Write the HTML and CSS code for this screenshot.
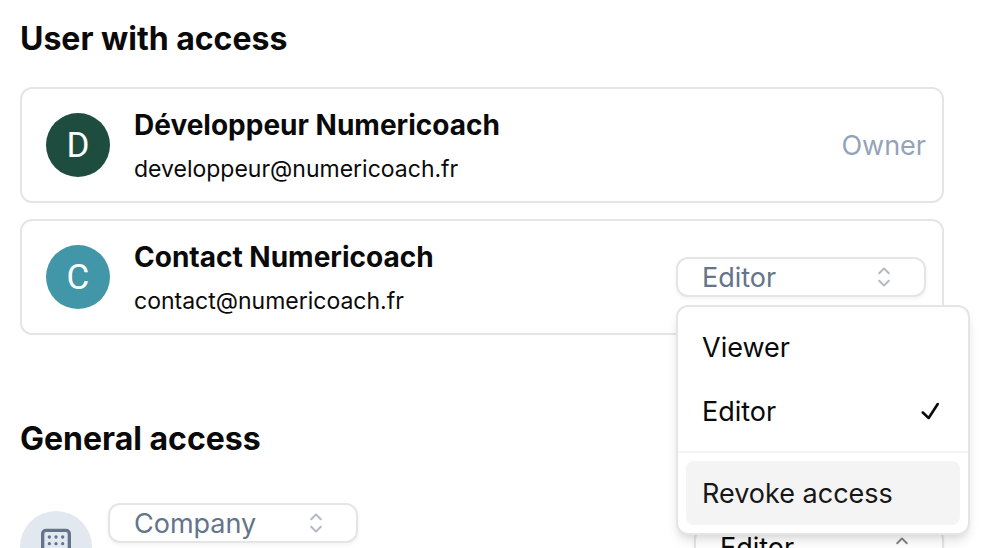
FILE: index.html
```html
<!DOCTYPE html>
<html lang="en">
<head>
    <meta charset="UTF-8">
    <meta name="viewport" content="width=device-width, initial-scale=1.0">
    <title>Share access</title>
    <link rel="stylesheet" href="styles.css">
</head>
<body>
    <!-- shared icons -->
    <svg class="sprite" aria-hidden="true">
        <symbol id="caret-sort" viewBox="0 0 15 15">
            <path fill="currentColor" fill-rule="evenodd" d="M4.93179 5.43179C4.75605 5.60753 4.75605 5.89245 4.93179 6.06819C5.10753 6.24392 5.39245 6.24392 5.56819 6.06819L7.49999 4.13638L9.43179 6.06819C9.60753 6.24392 9.89245 6.24392 10.0682 6.06819C10.2439 5.89245 10.2439 5.60753 10.0682 5.43179L7.81819 3.18179C7.73379 3.0974 7.61933 3.04999 7.49999 3.04999C7.38064 3.04999 7.26618 3.0974 7.18179 3.18179L4.93179 5.43179ZM10.0682 9.56819C10.2439 9.39245 10.2439 9.10753 10.0682 8.93179C9.89245 8.75606 9.60753 8.75606 9.43179 8.93179L7.49999 10.8636L5.56819 8.93179C5.39245 8.75606 5.10753 8.75606 4.93179 8.93179C4.75605 9.10753 4.75605 9.39245 4.93179 9.56819L7.18179 11.8182C7.35753 11.9939 7.64245 11.9939 7.81819 11.8182L10.0682 9.56819Z"/>
        </symbol>
    </svg>

    <main class="page">
        <section>
            <h2 class="title">User with access</h2>
            <ul class="users">
                <li class="user-card">
                    <span class="avatar avatar-green">D</span>
                    <div class="user-info">
                        <p class="user-name">Développeur Numericoach</p>
                        <p class="user-email">developpeur@numericoach.fr</p>
                    </div>
                    <span class="owner">Owner</span>
                </li>
                <li class="user-card">
                    <span class="avatar avatar-blue">C</span>
                    <div class="user-info">
                        <p class="user-name">Contact Numericoach</p>
                        <p class="user-email">contact@numericoach.fr</p>
                    </div>
                    <div class="select-box">
                        <select class="select" aria-label="Role of Contact Numericoach">
                            <option>Viewer</option>
                            <option selected>Editor</option>
                        </select>
                        <svg class="caret"><use href="#caret-sort"/></svg>
                        <div class="menu">
                            <div class="menu-group">
                                <button type="button" class="menu-item">Viewer</button>
                                <button type="button" class="menu-item">
                                    Editor
                                    <svg class="check" viewBox="0 0 15 15" aria-hidden="true">
                                        <path fill="currentColor" fill-rule="evenodd" d="M11.4669 3.72684C11.7558 3.91574 11.8369 4.30308 11.648 4.59198L7.39799 11.092C7.29783 11.2452 7.13556 11.3467 6.95402 11.3699C6.77247 11.3931 6.58989 11.3355 6.45446 11.2124L3.70446 8.71241C3.44905 8.48022 3.43023 8.08494 3.66242 7.82953C3.89461 7.57412 4.28989 7.55529 4.5453 7.78749L6.75292 9.79441L10.6018 3.90792C10.7907 3.61902 11.178 3.53795 11.4669 3.72684Z"/>
                                    </svg>
                                </button>
                            </div>
                            <div class="menu-group">
                                <button type="button" class="menu-item active">Revoke access</button>
                            </div>
                        </div>
                    </div>
                </li>
            </ul>
        </section>

        <section>
            <h2 class="title title-general">General access</h2>
            <div class="general">
                <span class="general-icon">
                    <svg viewBox="0 0 24 24" fill="none" stroke="currentColor" stroke-width="2" stroke-linecap="round" stroke-linejoin="round" aria-hidden="true">
                        <rect x="4" y="2" width="16" height="20" rx="2"/>
                        <path d="M9 22v-4h6v4M8 6h.01M16 6h.01M12 6h.01M12 10h.01M12 14h.01M16 10h.01M16 14h.01M8 10h.01M8 14h.01"/>
                    </svg>
                </span>
                <div class="general-scope">
                    <div class="select-box">
                        <select class="select" aria-label="Who has access">
                            <option>Company</option>
                        </select>
                        <svg class="caret"><use href="#caret-sort"/></svg>
                    </div>
                </div>
                <div class="select-box dark">
                    <select class="select" aria-label="General role">
                        <option>Editor</option>
                    </select>
                    <svg class="caret"><use href="#caret-sort"/></svg>
                </div>
            </div>
        </section>
    </main>
</body>
</html>
```
FILE: styles.css
```css
* {
    box-sizing: border-box;
}
body {
    margin: 0;
    font-family: Inter, "Liberation Sans", sans-serif;
    font-size: 27px;
    color: #0a0a0a;
    background-color: #ffffff;
}
p, h2, ul {
    margin: 0;
    padding: 0;
}
.sprite {
    display: none;
}
.page {
    height: 100vh;
    padding: 19px 40px 0 20px;
    overflow: hidden;
}
.title {
    margin-bottom: 28px;
    font-size: 32px;
    line-height: 40px;
    font-weight: 700;
}
.title-general {
    margin-top: 84px;
    margin-bottom: 44px;
}

/* users */
.users {
    display: flex;
    flex-direction: column;
    gap: 16px;
    list-style: none;
}
.user-card {
    display: flex;
    align-items: center;
    gap: 24px;
    min-height: 116px;
    padding: 0 16px 0 24px;
    border: 2px solid #e5e5e5;
    border-radius: 12px;
}
.avatar {
    display: flex;
    align-items: center;
    justify-content: center;
    flex-shrink: 0;
    width: 64px;
    height: 64px;
    border-radius: 50%;
    font-family: Roboto, sans-serif;
    font-size: 35px;
    color: #ffffff;
}
.avatar-green {
    background-color: #1e4d40;
}
.avatar-blue {
    background-color: #4197a8;
}
.user-info {
    flex: 1;
    padding-top: 4px;
}
.user-name,
.user-email {
    line-height: 44px;
}
.user-name {
    font-size: 28px;
    font-weight: 700;
}
.user-email {
    font-size: 23px;
}
.owner {
    color: #94a3b8;
}

/* select */
.select-box {
    position: relative;
    width: 250px;
    height: 40px;
    color: #64748b;
}
.select-box.dark {
    color: #0a0a0a;
}
.select {
    display: block;
    width: 100%;
    height: 100%;
    padding: 0 24px;
    border: 2px solid #e5e5e5;
    border-radius: 12px;
    appearance: none;
    font: inherit;
    color: inherit;
    background-color: #ffffff;
    box-shadow: 0 2px 4px rgba(0, 0, 0, 0.05);
}
.caret {
    position: absolute;
    top: 4px;
    right: 26px;
    width: 32px;
    height: 32px;
    opacity: 0.5;
    pointer-events: none;
}

/* role menu */
.menu {
    position: absolute;
    top: 48px;
    left: 0;
    z-index: 10;
    width: 294px;
    border: 2px solid #e5e5e5;
    border-radius: 12px;
    color: #0a0a0a;
    background-color: #ffffff;
    box-shadow: 0 8px 12px -2px rgba(0, 0, 0, 0.1), 0 4px 8px -4px rgba(0, 0, 0, 0.1);
}
.menu-group {
    padding: 8px;
}
.menu-group + .menu-group {
    border-top: 2px solid #f5f5f5;
}
.menu-item {
    display: flex;
    align-items: center;
    justify-content: space-between;
    width: 100%;
    height: 64px;
    padding: 0 14px 0 16px;
    border: none;
    border-radius: 8px;
    font: inherit;
    color: inherit;
    background: none;
    cursor: pointer;
}
.menu-item.active {
    color: #171717;
    background-color: #f4f4f4;
}
.check {
    width: 32px;
    height: 32px;
}

/* general access */
.general {
    display: flex;
    align-items: center;
    gap: 16px;
}
.general-icon {
    display: flex;
    align-items: center;
    justify-content: center;
    width: 72px;
    height: 72px;
    border-radius: 50%;
    color: #64748b;
    background-color: #e2e8f0;
}
.general-icon svg {
    width: 40px;
    height: 40px;
}
.general-scope {
    flex: 1;
    min-height: 88px;
}
```
